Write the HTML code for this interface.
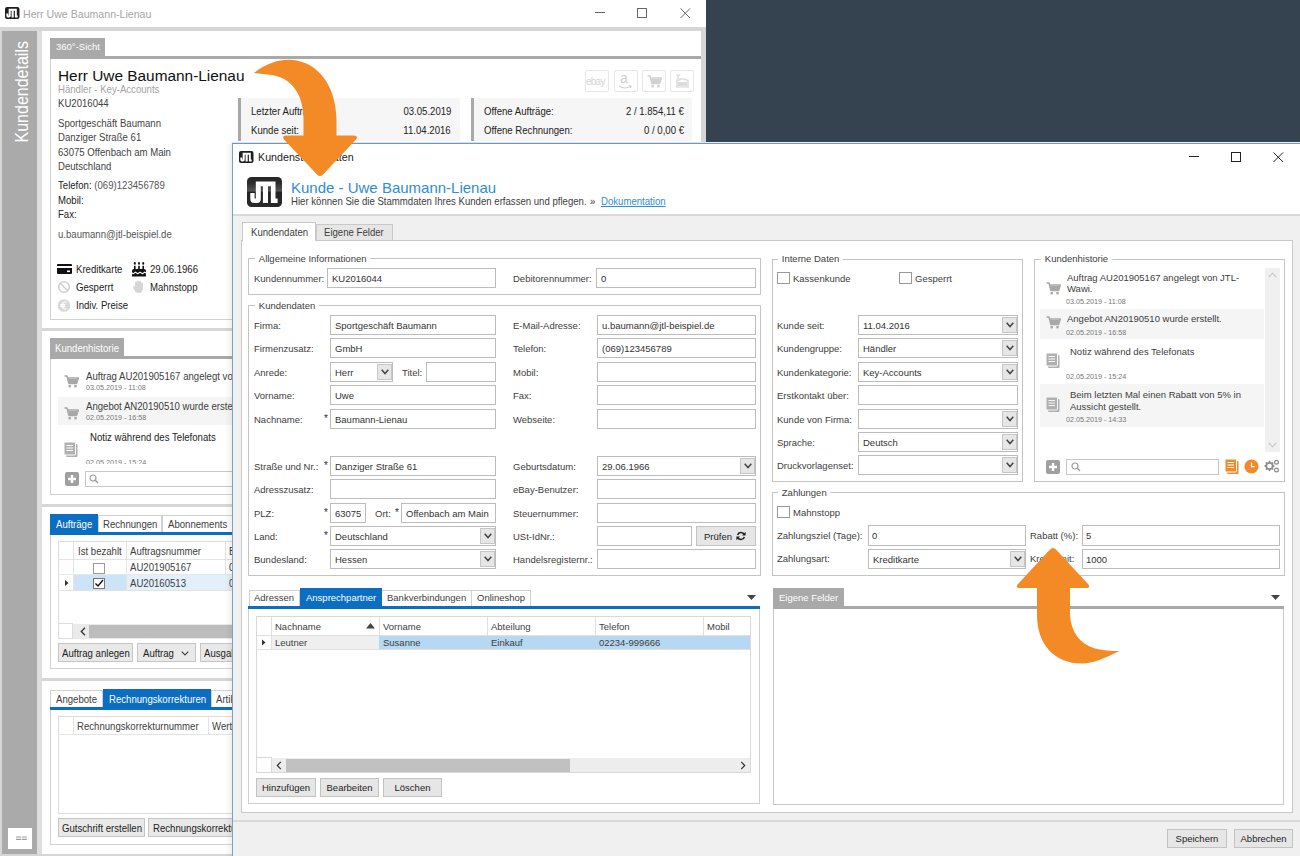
<!DOCTYPE html>
<html><head><meta charset="utf-8"><style>
html,body{margin:0;padding:0}
body{width:1300px;height:856px;overflow:hidden;position:relative;background:#34434f;font-family:"Liberation Sans",sans-serif}
body div,body span,body svg{position:absolute}
span{white-space:nowrap;line-height:1}
svg{overflow:visible}
</style></head><body>
<div style="left:0px;top:0px;width:706px;height:27px;background:#fff"></div>
<svg style="left:5px;top:7px" width="14.5" height="12" viewBox="0 0 35 30" preserveAspectRatio="none"><rect x="0" y="0" width="35" height="30" rx="5" fill="#1f1f1f"/><path d="M8.8 4.4H23.9V9.2H21V26H15.9V9.2H13.8V22Q13.8 26 9.8 26H7.3Q3.3 26 3.3 22V16H7.6V21.5H8.8Z M23.9 4.4H28.5V21.4H30.6V26H23.9Z" fill="#fff"/></svg>
<span style="left:23px;top:8.90px;font-size:11.13px;color:#a6a6a6;transform:scaleX(0.9524);transform-origin:0 0;">Herr Uwe Baumann-Lienau</span>
<svg style="left:595px;top:12px;" width="11" height="2" viewBox="0 0 11 2"><path d="M0 0.5h10" stroke="#666" stroke-width="1"/></svg>
<svg style="left:637px;top:8px;" width="11" height="11" viewBox="0 0 11 11"><rect x="0.5" y="0.5" width="9" height="9" fill="none" stroke="#666" stroke-width="1"/></svg>
<svg style="left:680px;top:8px;" width="11" height="11" viewBox="0 0 11 11"><path d="M0.5 0.5l9.5 9.5M10 0.5l-9.5 9.5" stroke="#666" stroke-width="1"/></svg>
<div style="left:0px;top:27px;width:706px;height:829px;background:#d6d6d6"></div>
<div style="left:2px;top:31px;width:35px;height:823px;background:#aaaaaa"></div>
<div style="left:37px;top:31px;width:5px;height:823px;background:#dedede"></div>
<div style="left:42px;top:31px;width:659px;height:823px;background:#fff"></div>
<span style="left:-28px;top:88px;width:100px;height:18px;line-height:18px;font-size:17.6px;color:#fff;transform:rotate(-90deg) scaleX(0.91);transform-origin:50% 50%;text-align:center">Kundendetails</span>
<div style="left:8px;top:828px;width:24px;height:21px;background:#fff"></div>
<svg style="left:16px;top:836px" width="11" height="5"><path d="M0 1h5M5.8 1h5M0 3.3h5M5.8 3.3h5" stroke="#9a9a9a" stroke-width="1.2"/></svg>
<div style="left:50px;top:38px;width:55px;height:19px;background:#a9a9a9"></div>
<span style="left:56px;top:41.82px;font-size:9.97px;color:#fff;transform:scaleX(0.9524);transform-origin:0 0;">360°-Sicht</span>
<div style="left:50px;top:56px;width:651px;height:3px;background:#a9a9a9"></div>
<div style="left:50px;top:59px;width:651px;height:261px;border:1px solid #d2d2d2;border-top:none;border-right:none;box-sizing:border-box"></div>
<span style="left:58px;top:68.48px;font-size:15.40px;color:#111;">Herr Uwe Baumann-Lienau</span>
<span style="left:58px;top:84.74px;font-size:10.08px;color:#a3a3a3;transform:scaleX(0.9524);transform-origin:0 0;">Händler - Key-Accounts</span>
<span style="left:58px;top:98.74px;font-size:10.08px;color:#404040;transform:scaleX(0.9524);transform-origin:0 0;">KU2016044</span>
<span style="left:58px;top:118.74px;font-size:10.08px;color:#444;transform:scaleX(0.9524);transform-origin:0 0;">Sportgeschäft Baumann</span>
<span style="left:58px;top:132.74px;font-size:10.08px;color:#444;transform:scaleX(0.9524);transform-origin:0 0;">Danziger Straße 61</span>
<span style="left:58px;top:147.74px;font-size:10.08px;color:#444;transform:scaleX(0.9524);transform-origin:0 0;">63075 Offenbach am Main</span>
<span style="left:58px;top:161.74px;font-size:10.08px;color:#444;transform:scaleX(0.9524);transform-origin:0 0;">Deutschland</span>
<span style="left:58px;top:180.74px;font-size:10.08px;color:#222;transform:scaleX(0.9524);transform-origin:0 0;">Telefon: <span style="position:static;color:#555">(069)123456789</span></span>
<span style="left:58px;top:195.74px;font-size:10.08px;color:#222;transform:scaleX(0.9524);transform-origin:0 0;">Mobil:</span>
<span style="left:58px;top:209.74px;font-size:10.08px;color:#222;transform:scaleX(0.9524);transform-origin:0 0;">Fax:</span>
<span style="left:58px;top:229.74px;font-size:10.08px;color:#555;transform:scaleX(0.9524);transform-origin:0 0;">u.baumann@jtl-beispiel.de</span>
<svg style="left:57px;top:264px;" width="15" height="10" viewBox="0 0 15 10"><rect x="0" y="0" width="15" height="10" rx="1" fill="#111"/><rect x="0" y="2" width="15" height="2" fill="#fff"/><rect x="10" y="6.5" width="3" height="1.6" fill="#fff"/></svg>
<span style="left:76px;top:264.74px;font-size:10.08px;color:#222;transform:scaleX(0.9524);transform-origin:0 0;">Kreditkarte</span>
<svg style="left:132px;top:262px;" width="14" height="15" viewBox="0 0 14 15"><g fill="#111"><ellipse cx="2.8" cy="1.4" rx="1" ry="1.3"/><ellipse cx="7" cy="1.4" rx="1" ry="1.3"/><ellipse cx="11.2" cy="1.4" rx="1" ry="1.3"/><rect x="2" y="3.8" width="1.6" height="4"/><rect x="6.2" y="3.8" width="1.6" height="4"/><rect x="10.4" y="3.8" width="1.6" height="4"/><path d="M0 10.3V9Q0 7 2 7H12Q14 7 14 9V10.3L14.00 10.49L13.65 10.16L13.30 9.86L12.95 9.66L12.60 9.60L12.25 9.70L11.90 9.94L11.55 10.25L11.20 10.58L10.85 10.84L10.50 10.99L10.15 10.97L9.80 10.81L9.45 10.53L9.10 10.20L8.75 9.90L8.40 9.68L8.05 9.60L7.70 9.68L7.35 9.90L7.00 10.20L6.65 10.53L6.30 10.81L5.95 10.97L5.60 10.99L5.25 10.84L4.90 10.58L4.55 10.25L4.20 9.94L3.85 9.70L3.50 9.60L3.15 9.66L2.80 9.86L2.45 10.16L2.10 10.49L1.75 10.78L1.40 10.96L1.05 10.99L0.70 10.87L0.35 10.62L0.00 10.30Z"/><path d="M0.00 11.60L0.35 11.92L0.70 12.17L1.05 12.29L1.40 12.26L1.75 12.08L2.10 11.79L2.45 11.46L2.80 11.16L3.15 10.96L3.50 10.90L3.85 11.00L4.20 11.24L4.55 11.55L4.90 11.88L5.25 12.14L5.60 12.29L5.95 12.27L6.30 12.11L6.65 11.83L7.00 11.50L7.35 11.20L7.70 10.98L8.05 10.90L8.40 10.98L8.75 11.20L9.10 11.50L9.45 11.83L9.80 12.11L10.15 12.27L10.50 12.29L10.85 12.14L11.20 11.88L11.55 11.55L11.90 11.24L12.25 11.00L12.60 10.90L12.95 10.96L13.30 11.16L13.65 11.46L14.00 11.79V14.4H0Z"/></g></svg>
<span style="left:150px;top:264.74px;font-size:10.08px;color:#222;transform:scaleX(0.9524);transform-origin:0 0;">29.06.1966</span>
<svg style="left:57px;top:281px;" width="14" height="12" viewBox="0 0 14 12"><circle cx="7" cy="6" r="5.3" fill="none" stroke="#cfcfcf" stroke-width="1.5"/><path d="M3.3 2.3l7.4 7.4" stroke="#cfcfcf" stroke-width="1.5"/></svg>
<span style="left:76px;top:282.74px;font-size:10.08px;color:#222;transform:scaleX(0.9524);transform-origin:0 0;">Gesperrt</span>
<svg style="left:133px;top:280px;" width="12" height="13" viewBox="0 0 12 13"><path d="M2 6v-3.5a1 1 0 0 1 2 0V6V1.5a1 1 0 0 1 2 0V6V2a1 1 0 0 1 2 0V6V3.5a1 1 0 0 1 2 0V8q0 5-4.5 5Q2.5 13 1 9.5L0 7q0-1 1-.5z" fill="#d6d6d6"/></svg>
<span style="left:150px;top:282.74px;font-size:10.08px;color:#222;transform:scaleX(0.9524);transform-origin:0 0;">Mahnstopp</span>
<svg style="left:57px;top:299px;" width="14" height="13" viewBox="0 0 14 13"><circle cx="7" cy="6.5" r="6.3" fill="#d9d9d9"/><path d="M9.6 3.2A3.5 3.5 0 1 0 9.6 9.8M3.3 5.6h5M3.3 7.4h5" fill="none" stroke="#fff" stroke-width="1.2"/></svg>
<span style="left:76px;top:300.74px;font-size:10.08px;color:#222;transform:scaleX(0.9524);transform-origin:0 0;">Indiv. Preise</span>
<div style="left:585px;top:70px;width:24px;height:22px;border:1px solid #e6e6e6;border-radius:2px;box-sizing:border-box"></div>
<div style="left:614px;top:70px;width:24px;height:22px;border:1px solid #e6e6e6;border-radius:2px;box-sizing:border-box"></div>
<div style="left:642px;top:70px;width:24px;height:22px;border:1px solid #e6e6e6;border-radius:2px;box-sizing:border-box"></div>
<div style="left:670px;top:70px;width:24px;height:22px;border:1px solid #e6e6e6;border-radius:2px;box-sizing:border-box"></div>
<span style="left:586px;top:76.40px;font-size:10.50px;color:#d4d4d4;transform:scaleX(0.9524);transform-origin:0 0;letter-spacing:-0.8px">ebay</span>
<span style="left:620px;top:71.04px;font-size:14.70px;color:#d0d0d0;transform:scaleX(0.9524);transform-origin:0 0;">a</span>
<svg style="left:618px;top:85px;" width="15" height="5" viewBox="0 0 15 5"><path d="M1 1q6 4 12 0M11 0.3l2 .7-.6 2" fill="none" stroke="#d0d0d0" stroke-width="1.1"/></svg>
<svg style="left:647px;top:75px;" width="15" height="13" viewBox="0 0 15 13"><path d="M0.5 1h2.5l2 7.5h7.5l1.8-5.5h-10" fill="none" stroke="#d0d0d0" stroke-width="1.6" stroke-linejoin="round"/><rect x="4.5" y="4" width="8.5" height="4" fill="#d0d0d0"/><rect x="4.5" y="10" width="2.4" height="2.4" fill="#d0d0d0"/><rect x="10.3" y="10" width="2.4" height="2.4" fill="#d0d0d0"/></svg>
<svg style="left:675px;top:74px;" width="15" height="15" viewBox="0 0 15 15"><path d="M1 1h4M3 1v4M1 13h13M2 13v-7h3v-1h5v1h3v7" fill="none" stroke="#d4d4d4" stroke-width="1.2"/><rect x="3" y="8" width="9" height="4" fill="#dcdcdc"/></svg>
<div style="left:238px;top:98px;width:3px;height:43px;background:#a9a9a9"></div>
<div style="left:241px;top:98px;width:219px;height:43px;background:#f6f6f6"></div>
<span style="left:251px;top:106.74px;font-size:10.08px;color:#222;transform:scaleX(0.9524);transform-origin:0 0;">Letzter Auftrag:</span>
<span style="right:849px;top:106.74px;font-size:10.08px;color:#222;transform:scaleX(0.9524);transform-origin:100% 0;">03.05.2019</span>
<span style="left:251px;top:125.74px;font-size:10.08px;color:#222;transform:scaleX(0.9524);transform-origin:0 0;">Kunde seit:</span>
<span style="right:849px;top:125.74px;font-size:10.08px;color:#222;transform:scaleX(0.9524);transform-origin:100% 0;">11.04.2016</span>
<div style="left:471px;top:98px;width:3px;height:43px;background:#a9a9a9"></div>
<div style="left:474px;top:98px;width:218px;height:43px;background:#f6f6f6"></div>
<span style="left:484px;top:106.74px;font-size:10.08px;color:#222;transform:scaleX(0.9524);transform-origin:0 0;">Offene Aufträge:</span>
<span style="right:616px;top:106.74px;font-size:10.08px;color:#222;transform:scaleX(0.9524);transform-origin:100% 0;">2 / 1.854,11 €</span>
<span style="left:484px;top:125.74px;font-size:10.08px;color:#222;transform:scaleX(0.9524);transform-origin:0 0;">Offene Rechnungen:</span>
<span style="right:616px;top:125.74px;font-size:10.08px;color:#222;transform:scaleX(0.9524);transform-origin:100% 0;">0 / 0,00 €</span>
<div style="left:42px;top:328px;width:659px;height:3px;background:#d6d6d6"></div>
<div style="left:50px;top:338px;width:74px;height:18px;background:#a9a9a9"></div>
<span style="left:55px;top:343.74px;font-size:10.08px;color:#fff;transform:scaleX(0.9524);transform-origin:0 0;">Kundenhistorie</span>
<div style="left:50px;top:356px;width:650px;height:3px;background:#a9a9a9"></div>
<div style="left:50px;top:359px;width:648px;height:136px;border:1px solid #d2d2d2;border-top:none;box-sizing:border-box"></div>
<svg style="left:64px;top:375px;" width="15" height="13" viewBox="0 0 15 13"><path d="M0.5 1h2.5l2 7.5h7.5l1.8-5.5h-10" fill="none" stroke="#a8a8a8" stroke-width="1.6" stroke-linejoin="round"/><rect x="4.5" y="4" width="8.5" height="4" fill="#a8a8a8"/><rect x="4.5" y="10" width="2.4" height="2.4" fill="#a8a8a8"/><rect x="10.3" y="10" width="2.4" height="2.4" fill="#a8a8a8"/></svg>
<span style="left:86px;top:371.74px;font-size:10.08px;color:#404040;transform:scaleX(0.9524);transform-origin:0 0;">Auftrag AU201905167 angelegt von JTL-Wawi.</span>
<span style="left:86px;top:384.25px;font-size:7.56px;color:#777;transform:scaleX(0.9524);transform-origin:0 0;">03.05.2019 - 11:08</span>
<div style="left:58px;top:397px;width:640px;height:28px;background:#f5f5f5"></div>
<svg style="left:64px;top:407px;" width="15" height="13" viewBox="0 0 15 13"><path d="M0.5 1h2.5l2 7.5h7.5l1.8-5.5h-10" fill="none" stroke="#a8a8a8" stroke-width="1.6" stroke-linejoin="round"/><rect x="4.5" y="4" width="8.5" height="4" fill="#a8a8a8"/><rect x="4.5" y="10" width="2.4" height="2.4" fill="#a8a8a8"/><rect x="10.3" y="10" width="2.4" height="2.4" fill="#a8a8a8"/></svg>
<span style="left:86px;top:401.74px;font-size:10.08px;color:#404040;transform:scaleX(0.9524);transform-origin:0 0;">Angebot AN20190510 wurde erstellt.</span>
<span style="left:86px;top:414.25px;font-size:7.56px;color:#777;transform:scaleX(0.9524);transform-origin:0 0;">02.05.2019 - 16:58</span>
<svg style="left:64px;top:442px;" width="14" height="15" viewBox="0 0 14 15"><rect x="2" y="2" width="11.5" height="13" rx="1" fill="#b0b0b0"/><rect x="0" y="0" width="11.5" height="13" rx="1" fill="#b0b0b0" stroke="#fff" stroke-width="1"/><path d="M2.5 3.5h6.5M2.5 6h6.5M2.5 8.5h6.5" stroke="#fff" stroke-width="1.1"/></svg>
<span style="left:90px;top:432.74px;font-size:10.08px;color:#222;transform:scaleX(0.9524);transform-origin:0 0;">Notiz während des Telefonats</span>
<div style="left:86px;top:458px;width:200px;height:6px;overflow:hidden"><span style="left:0;top:0.5px;font-size:7.2px;color:#777">02.05.2019 - 15:24</span></div>
<svg style="left:65px;top:472px;" width="14" height="14" viewBox="0 0 14 14"><rect x="0" y="0" width="14" height="14" rx="2" fill="#a0a0a0"/><path d="M7.0 3V11M3 7.0H11" stroke="#fff" stroke-width="2.4"/></svg>
<div style="left:85px;top:471px;width:615px;height:16px;border:1px solid #c8c8c8;box-sizing:border-box;background:#fff"></div>
<svg style="left:89px;top:474px;" width="10" height="10" viewBox="0 0 10 10"><circle cx="4" cy="4" r="3" fill="none" stroke="#9a9a9a" stroke-width="1.2"/><path d="M6.2 6.2l2.8 2.8" stroke="#9a9a9a" stroke-width="1.4"/></svg>
<div style="left:42px;top:504px;width:659px;height:3px;background:#d6d6d6"></div>
<div style="left:50px;top:514px;width:48px;height:18px;background:#0b6ec2"></div>
<span style="left:56px;top:519.74px;font-size:10.08px;color:#fff;transform:scaleX(0.9524);transform-origin:0 0;">Aufträge</span>
<div style="left:98px;top:515px;width:64px;height:17px;border:1px solid #d0d0d0;border-bottom:none;box-sizing:border-box;background:#fff"></div>
<span style="left:103px;top:519.74px;font-size:10.08px;color:#404040;transform:scaleX(0.9524);transform-origin:0 0;">Rechnungen</span>
<div style="left:162px;top:515px;width:80px;height:17px;border:1px solid #d0d0d0;border-bottom:none;box-sizing:border-box;background:#fff"></div>
<span style="left:168px;top:519.74px;font-size:10.08px;color:#404040;transform:scaleX(0.9524);transform-origin:0 0;">Abonnements</span>
<div style="left:50px;top:532px;width:650px;height:3px;background:#0b6ec2"></div>
<div style="left:50px;top:535px;width:648px;height:134px;border:1px solid #d2d2d2;border-top:none;box-sizing:border-box"></div>
<div style="left:58px;top:541px;width:640px;height:98px;border:1px solid #dcdcdc;box-sizing:border-box"></div>
<div style="left:58px;top:559px;width:640px;height:1px;background:#e3e3e3"></div>
<div style="left:73px;top:541px;width:1px;height:50px;background:#e3e3e3"></div>
<div style="left:126px;top:541px;width:1px;height:50px;background:#e3e3e3"></div>
<div style="left:225px;top:541px;width:1px;height:50px;background:#e3e3e3"></div>
<div style="left:58px;top:574px;width:640px;height:1px;background:#e8e8e8"></div>
<div style="left:74px;top:575px;width:52px;height:15px;background:#cce4f7"></div>
<div style="left:127px;top:575px;width:571px;height:15px;background:#e3effa"></div>
<div style="left:58px;top:590px;width:640px;height:1px;background:#e3e3e3"></div>
<span style="left:78px;top:546.74px;font-size:10.08px;color:#404040;transform:scaleX(0.9524);transform-origin:0 0;">Ist bezahlt</span>
<span style="left:130px;top:546.74px;font-size:10.08px;color:#404040;transform:scaleX(0.9524);transform-origin:0 0;">Auftragsnummer</span>
<span style="left:229px;top:546.74px;font-size:10.08px;color:#404040;transform:scaleX(0.9524);transform-origin:0 0;">B</span>
<div style="left:93px;top:563px;width:12px;height:11px;border:1px solid #9a9a9a;background:#fff;box-sizing:border-box"></div>
<span style="left:130px;top:562.74px;font-size:10.08px;color:#404040;transform:scaleX(0.9524);transform-origin:0 0;">AU201905167</span>
<span style="left:229px;top:562.74px;font-size:10.08px;color:#404040;transform:scaleX(0.9524);transform-origin:0 0;">0</span>
<div style="left:93px;top:578px;width:12px;height:11px;border:1px solid #777;background:#fff;box-sizing:border-box"></div>
<svg style="left:94px;top:579px;" width="10" height="9" viewBox="0 0 10 9"><path d="M1.5 4.5l2.5 2.5 5-6" fill="none" stroke="#111" stroke-width="1.4"/></svg>
<svg style="left:65px;top:580px;" width="4" height="6" viewBox="0 0 4 6"><path d="M0 0l3.5 3-3.5 3z" fill="#333"/></svg>
<span style="left:130px;top:578.74px;font-size:10.08px;color:#404040;transform:scaleX(0.9524);transform-origin:0 0;">AU20160513</span>
<span style="left:229px;top:578.74px;font-size:10.08px;color:#404040;transform:scaleX(0.9524);transform-origin:0 0;">0</span>
<div style="left:58px;top:624px;width:640px;height:15px;background:#eaeaea"></div>
<div style="left:58px;top:623px;width:15px;height:16px;background:#fff;border:1px solid #dcdcdc;box-sizing:border-box"></div>
<svg style="left:80px;top:627px;" width="6" height="9" viewBox="0 0 6 9"><path d="M5 0.8L1.3 4.5 5 8.2" fill="none" stroke="#333" stroke-width="1.3"/></svg>
<div style="left:89px;top:625px;width:611px;height:13px;background:#bdbdbd"></div>
<div style="left:58px;top:643px;width:75px;height:19px;background:#e9e9e9;border:1px solid #c6c6c6;box-sizing:border-box"></div>
<span style="left:62px;top:648.74px;font-size:10.08px;color:#222;transform:scaleX(0.9524);transform-origin:0 0;">Auftrag anlegen</span>
<div style="left:137px;top:643px;width:59px;height:19px;background:#e9e9e9;border:1px solid #c6c6c6;box-sizing:border-box"></div>
<span style="left:143px;top:648.74px;font-size:10.08px;color:#222;transform:scaleX(0.9524);transform-origin:0 0;">Auftrag</span>
<svg style="left:181px;top:651px;" width="8" height="5" viewBox="0 0 8 5"><path d="M0.7 0.7L4.0 4L7.3 0.7" fill="none" stroke="#444" stroke-width="1.2"/></svg>
<div style="left:200px;top:643px;width:60px;height:19px;background:#e9e9e9;border:1px solid #c6c6c6;box-sizing:border-box"></div>
<span style="left:204px;top:648.74px;font-size:10.08px;color:#222;transform:scaleX(0.9524);transform-origin:0 0;">Ausgabe</span>
<div style="left:42px;top:678px;width:659px;height:3px;background:#d6d6d6"></div>
<div style="left:50px;top:690px;width:53px;height:17px;border:1px solid #d0d0d0;border-bottom:none;box-sizing:border-box;background:#fff"></div>
<span style="left:56px;top:694.74px;font-size:10.08px;color:#404040;transform:scaleX(0.9524);transform-origin:0 0;">Angebote</span>
<div style="left:103px;top:689px;width:108px;height:18px;background:#0b6ec2"></div>
<span style="left:109px;top:694.74px;font-size:10.08px;color:#fff;transform:scaleX(0.9524);transform-origin:0 0;">Rechnungskorrekturen</span>
<div style="left:211px;top:690px;width:60px;height:17px;border:1px solid #d0d0d0;border-bottom:none;box-sizing:border-box;background:#fff"></div>
<span style="left:216px;top:694.74px;font-size:10.08px;color:#404040;transform:scaleX(0.9524);transform-origin:0 0;">Artikel</span>
<div style="left:50px;top:707px;width:650px;height:3px;background:#0b6ec2"></div>
<div style="left:50px;top:710px;width:648px;height:135px;border:1px solid #d2d2d2;border-top:none;box-sizing:border-box"></div>
<div style="left:58px;top:716px;width:640px;height:98px;border:1px solid #dcdcdc;box-sizing:border-box"></div>
<div style="left:58px;top:734px;width:640px;height:1px;background:#e3e3e3"></div>
<div style="left:73px;top:716px;width:1px;height:19px;background:#e3e3e3"></div>
<div style="left:208px;top:716px;width:1px;height:19px;background:#e3e3e3"></div>
<span style="left:77px;top:721.74px;font-size:10.08px;color:#404040;transform:scaleX(0.9524);transform-origin:0 0;">Rechnungskorrekturnummer</span>
<span style="left:212px;top:721.74px;font-size:10.08px;color:#404040;transform:scaleX(0.9524);transform-origin:0 0;">Wert</span>
<div style="left:58px;top:818px;width:87px;height:19px;background:#e9e9e9;border:1px solid #c6c6c6;box-sizing:border-box"></div>
<span style="left:62px;top:823.74px;font-size:10.08px;color:#222;transform:scaleX(0.9524);transform-origin:0 0;">Gutschrift erstellen</span>
<div style="left:148px;top:818px;width:110px;height:19px;background:#e9e9e9;border:1px solid #c6c6c6;box-sizing:border-box"></div>
<span style="left:153px;top:823.74px;font-size:10.08px;color:#222;transform:scaleX(0.9524);transform-origin:0 0;">Rechnungskorrektur</span>
<div style="left:232px;top:142px;width:1068px;height:714px;background:#f0f0f0"></div>
<div style="left:231px;top:142px;width:475px;height:1px;background:#d3e5f3"></div>
<div style="left:232px;top:143px;width:1068px;height:1px;background:#7497b9"></div>
<div style="left:232px;top:143px;width:1px;height:713px;background:#7aa0c4"></div>
<div style="left:225px;top:144px;width:7px;height:712px;background:linear-gradient(to right, rgba(0,0,0,0), rgba(0,0,0,0.06))"></div>
<div style="left:233px;top:144px;width:1067px;height:71px;background:#fff"></div>
<div style="left:233px;top:214px;width:1067px;height:2px;background:#d9d9d9"></div>
<svg style="left:239px;top:151px" width="14.5" height="12" viewBox="0 0 35 30" preserveAspectRatio="none"><rect x="0" y="0" width="35" height="30" rx="5" fill="#1f1f1f"/><path d="M8.8 4.4H23.9V9.2H21V26H15.9V9.2H13.8V22Q13.8 26 9.8 26H7.3Q3.3 26 3.3 22V16H7.6V21.5H8.8Z M23.9 4.4H28.5V21.4H30.6V26H23.9Z" fill="#fff"/></svg>
<span style="left:258px;top:151.81px;font-size:11.23px;color:#222;transform:scaleX(0.9524);transform-origin:0 0;">Kundenstammdaten</span>
<svg style="left:1189px;top:156px;" width="11" height="2" viewBox="0 0 11 2"><path d="M0 0.5h10" stroke="#222" stroke-width="1"/></svg>
<svg style="left:1231px;top:152px;" width="11" height="11" viewBox="0 0 11 11"><rect x="0.5" y="0.5" width="9" height="9" fill="none" stroke="#222" stroke-width="1"/></svg>
<svg style="left:1273px;top:152px;" width="11" height="11" viewBox="0 0 11 11"><path d="M0.5 0.5l9.5 9.5M10 0.5l-9.5 9.5" stroke="#222" stroke-width="1"/></svg>
<svg style="left:247px;top:177px;" width="35" height="30" viewBox="0 0 35 30"><defs><linearGradient id="jg" x1="0" y1="0" x2="0" y2="1"><stop offset="0" stop-color="#262626"/><stop offset="0.2" stop-color="#2c2c2c"/><stop offset="0.47" stop-color="#555"/><stop offset="0.5" stop-color="#232323"/><stop offset="1" stop-color="#2a2a2a"/></linearGradient></defs><rect x="0" y="0" width="35" height="30" rx="4.5" fill="url(#jg)"/><path d="M8.8 4.4H23.9V9.2H21V26H15.9V9.2H13.8V22Q13.8 26 9.8 26H7.3Q3.3 26 3.3 22V16H7.6V21.5H8.8Z M23.9 4.4H28.5V21.4H30.6V26H23.9Z" fill="#fff"/></svg>
<span style="left:291px;top:179.80px;font-size:15.00px;color:#2f8dd3;">Kunde - Uwe Baumann-Lienau</span>
<span style="left:291px;top:196.74px;font-size:10.08px;color:#404040;transform:scaleX(0.9524);transform-origin:0 0;">Hier können Sie die Stammdaten Ihres Kunden erfassen und pflegen.</span>
<span style="left:590px;top:196.74px;font-size:10.08px;color:#404040;transform:scaleX(0.9524);transform-origin:0 0;">»</span>
<span style="left:601px;top:196.74px;font-size:10.08px;color:#2f8dd3;transform:scaleX(0.9524);transform-origin:0 0;text-decoration:underline">Dokumentation</span>
<div style="left:241px;top:240px;width:1052px;height:573px;background:#fff;border:1px solid #c9c9c9;box-sizing:border-box"></div>
<div style="left:316px;top:224px;width:77px;height:17px;background:#e6e6e6;border:1px solid #c9c9c9;box-sizing:border-box"></div>
<span style="left:324px;top:227.74px;font-size:10.08px;color:#404040;transform:scaleX(0.9524);transform-origin:0 0;">Eigene Felder</span>
<div style="left:242px;top:222px;width:74px;height:19px;background:#fff;border:1px solid #c9c9c9;border-bottom:none;box-sizing:border-box"></div>
<span style="left:251px;top:227.74px;font-size:10.08px;color:#404040;transform:scaleX(0.9524);transform-origin:0 0;">Kundendaten</span>
<div style="left:248px;top:258px;width:513px;height:37px;border:1px solid #c4c4c4;box-sizing:border-box"></div>
<span style="left:259px;top:253.82px;font-size:9.97px;color:#404040;transform:scaleX(0.9524);transform-origin:0 0;background:#fff;padding:0 4px;margin-left:-4px">Allgemeine Informationen</span>
<span style="left:254px;top:273.82px;font-size:9.97px;color:#404040;transform:scaleX(0.9524);transform-origin:0 0;">Kundennummer:</span>
<div style="left:327px;top:268px;width:169px;height:20px;background:#fff;border:1px solid #bcbcbc;box-sizing:border-box"></div>
<span style="left:332px;top:273.82px;font-size:9.97px;color:#333;transform:scaleX(0.9524);transform-origin:0 0;">KU2016044</span>
<span style="left:513px;top:273.82px;font-size:9.97px;color:#404040;transform:scaleX(0.9524);transform-origin:0 0;">Debitorennummer:</span>
<div style="left:596px;top:268px;width:160px;height:20px;background:#fff;border:1px solid #bcbcbc;box-sizing:border-box"></div>
<span style="left:601px;top:273.82px;font-size:9.97px;color:#333;transform:scaleX(0.9524);transform-origin:0 0;">0</span>
<div style="left:248px;top:305px;width:513px;height:271px;border:1px solid #c4c4c4;box-sizing:border-box"></div>
<span style="left:259px;top:300.82px;font-size:9.97px;color:#404040;transform:scaleX(0.9524);transform-origin:0 0;background:#fff;padding:0 4px;margin-left:-4px">Kundendaten</span>
<span style="left:254px;top:320.82px;font-size:9.97px;color:#404040;transform:scaleX(0.9524);transform-origin:0 0;">Firma:</span>
<div style="left:330px;top:315px;width:166px;height:20px;background:#fff;border:1px solid #bcbcbc;box-sizing:border-box"></div>
<span style="left:335px;top:320.82px;font-size:9.97px;color:#333;transform:scaleX(0.9524);transform-origin:0 0;">Sportgeschäft Baumann</span>
<span style="left:254px;top:343.82px;font-size:9.97px;color:#404040;transform:scaleX(0.9524);transform-origin:0 0;">Firmenzusatz:</span>
<div style="left:330px;top:338px;width:166px;height:20px;background:#fff;border:1px solid #bcbcbc;box-sizing:border-box"></div>
<span style="left:335px;top:343.82px;font-size:9.97px;color:#333;transform:scaleX(0.9524);transform-origin:0 0;">GmbH</span>
<span style="left:254px;top:367.82px;font-size:9.97px;color:#404040;transform:scaleX(0.9524);transform-origin:0 0;">Anrede:</span>
<div style="left:330px;top:362px;width:63px;height:20px;background:#fff;border:1px solid #bcbcbc;box-sizing:border-box"></div>
<span style="left:335px;top:367.82px;font-size:9.97px;color:#333;transform:scaleX(0.9524);transform-origin:0 0;">Herr</span>
<div style="left:377px;top:364px;width:15px;height:16px;background:#e6e6e6;border:1px solid #c6c6c6;box-sizing:border-box"></div>
<svg style="left:380.5px;top:369px;" width="8" height="5.5" viewBox="0 0 8 5.5"><path d="M0.7 0.7L4.0 4.5L7.3 0.7" fill="none" stroke="#444" stroke-width="1.5"/></svg>
<span style="left:402px;top:367.82px;font-size:9.97px;color:#404040;transform:scaleX(0.9524);transform-origin:0 0;">Titel:</span>
<div style="left:426px;top:362px;width:70px;height:20px;background:#fff;border:1px solid #bcbcbc;box-sizing:border-box"></div>
<span style="left:254px;top:390.82px;font-size:9.97px;color:#404040;transform:scaleX(0.9524);transform-origin:0 0;">Vorname:</span>
<div style="left:330px;top:385px;width:166px;height:20px;background:#fff;border:1px solid #bcbcbc;box-sizing:border-box"></div>
<span style="left:335px;top:390.82px;font-size:9.97px;color:#333;transform:scaleX(0.9524);transform-origin:0 0;">Uwe</span>
<span style="left:254px;top:414.82px;font-size:9.97px;color:#404040;transform:scaleX(0.9524);transform-origin:0 0;">Nachname:</span>
<span style="left:324px;top:413.40px;font-size:10.50px;color:#333;transform:scaleX(0.9524);transform-origin:0 0;">*</span>
<div style="left:330px;top:409px;width:166px;height:20px;background:#fff;border:1px solid #bcbcbc;box-sizing:border-box"></div>
<span style="left:335px;top:414.82px;font-size:9.97px;color:#333;transform:scaleX(0.9524);transform-origin:0 0;">Baumann-Lienau</span>
<span style="left:254px;top:461.82px;font-size:9.97px;color:#404040;transform:scaleX(0.9524);transform-origin:0 0;">Straße und Nr.:</span>
<span style="left:324px;top:460.40px;font-size:10.50px;color:#333;transform:scaleX(0.9524);transform-origin:0 0;">*</span>
<div style="left:330px;top:456px;width:166px;height:20px;background:#fff;border:1px solid #bcbcbc;box-sizing:border-box"></div>
<span style="left:335px;top:461.82px;font-size:9.97px;color:#333;transform:scaleX(0.9524);transform-origin:0 0;">Danziger Straße 61</span>
<span style="left:254px;top:484.82px;font-size:9.97px;color:#404040;transform:scaleX(0.9524);transform-origin:0 0;">Adresszusatz:</span>
<div style="left:330px;top:479px;width:166px;height:20px;background:#fff;border:1px solid #bcbcbc;box-sizing:border-box"></div>
<span style="left:254px;top:508.82px;font-size:9.97px;color:#404040;transform:scaleX(0.9524);transform-origin:0 0;">PLZ:</span>
<span style="left:324px;top:507.40px;font-size:10.50px;color:#333;transform:scaleX(0.9524);transform-origin:0 0;">*</span>
<div style="left:330px;top:503px;width:36px;height:20px;background:#fff;border:1px solid #bcbcbc;box-sizing:border-box"></div>
<span style="left:335px;top:508.82px;font-size:9.97px;color:#333;transform:scaleX(0.9524);transform-origin:0 0;">63075</span>
<span style="left:375px;top:508.82px;font-size:9.97px;color:#404040;transform:scaleX(0.9524);transform-origin:0 0;">Ort:</span>
<span style="left:395px;top:507.40px;font-size:10.50px;color:#333;transform:scaleX(0.9524);transform-origin:0 0;">*</span>
<div style="left:401px;top:503px;width:95px;height:20px;background:#fff;border:1px solid #bcbcbc;box-sizing:border-box"></div>
<span style="left:406px;top:508.82px;font-size:9.97px;color:#333;transform:scaleX(0.9524);transform-origin:0 0;">Offenbach am Main</span>
<span style="left:254px;top:531.82px;font-size:9.97px;color:#404040;transform:scaleX(0.9524);transform-origin:0 0;">Land:</span>
<span style="left:324px;top:530.40px;font-size:10.50px;color:#333;transform:scaleX(0.9524);transform-origin:0 0;">*</span>
<div style="left:330px;top:526px;width:166px;height:20px;background:#fff;border:1px solid #bcbcbc;box-sizing:border-box"></div>
<span style="left:335px;top:531.82px;font-size:9.97px;color:#333;transform:scaleX(0.9524);transform-origin:0 0;">Deutschland</span>
<div style="left:480px;top:528px;width:15px;height:16px;background:#e6e6e6;border:1px solid #c6c6c6;box-sizing:border-box"></div>
<svg style="left:483.5px;top:533px;" width="8" height="5.5" viewBox="0 0 8 5.5"><path d="M0.7 0.7L4.0 4.5L7.3 0.7" fill="none" stroke="#444" stroke-width="1.5"/></svg>
<span style="left:254px;top:554.82px;font-size:9.97px;color:#404040;transform:scaleX(0.9524);transform-origin:0 0;">Bundesland:</span>
<div style="left:330px;top:549px;width:166px;height:20px;background:#fff;border:1px solid #bcbcbc;box-sizing:border-box"></div>
<span style="left:335px;top:554.82px;font-size:9.97px;color:#333;transform:scaleX(0.9524);transform-origin:0 0;">Hessen</span>
<div style="left:480px;top:551px;width:15px;height:16px;background:#e6e6e6;border:1px solid #c6c6c6;box-sizing:border-box"></div>
<svg style="left:483.5px;top:556px;" width="8" height="5.5" viewBox="0 0 8 5.5"><path d="M0.7 0.7L4.0 4.5L7.3 0.7" fill="none" stroke="#444" stroke-width="1.5"/></svg>
<span style="left:513px;top:320.82px;font-size:9.97px;color:#404040;transform:scaleX(0.9524);transform-origin:0 0;">E-Mail-Adresse:</span>
<div style="left:597px;top:315px;width:159px;height:20px;background:#fff;border:1px solid #bcbcbc;box-sizing:border-box"></div>
<span style="left:602px;top:320.82px;font-size:9.97px;color:#333;transform:scaleX(0.9524);transform-origin:0 0;">u.baumann@jtl-beispiel.de</span>
<span style="left:513px;top:343.82px;font-size:9.97px;color:#404040;transform:scaleX(0.9524);transform-origin:0 0;">Telefon:</span>
<div style="left:597px;top:338px;width:159px;height:20px;background:#fff;border:1px solid #bcbcbc;box-sizing:border-box"></div>
<span style="left:602px;top:343.82px;font-size:9.97px;color:#333;transform:scaleX(0.9524);transform-origin:0 0;">(069)123456789</span>
<span style="left:513px;top:367.82px;font-size:9.97px;color:#404040;transform:scaleX(0.9524);transform-origin:0 0;">Mobil:</span>
<div style="left:597px;top:362px;width:159px;height:20px;background:#fff;border:1px solid #bcbcbc;box-sizing:border-box"></div>
<span style="left:513px;top:390.82px;font-size:9.97px;color:#404040;transform:scaleX(0.9524);transform-origin:0 0;">Fax:</span>
<div style="left:597px;top:385px;width:159px;height:20px;background:#fff;border:1px solid #bcbcbc;box-sizing:border-box"></div>
<span style="left:513px;top:414.82px;font-size:9.97px;color:#404040;transform:scaleX(0.9524);transform-origin:0 0;">Webseite:</span>
<div style="left:597px;top:409px;width:159px;height:20px;background:#fff;border:1px solid #bcbcbc;box-sizing:border-box"></div>
<span style="left:513px;top:461.82px;font-size:9.97px;color:#404040;transform:scaleX(0.9524);transform-origin:0 0;">Geburtsdatum:</span>
<div style="left:597px;top:456px;width:159px;height:20px;background:#fff;border:1px solid #bcbcbc;box-sizing:border-box"></div>
<span style="left:602px;top:461.82px;font-size:9.97px;color:#333;transform:scaleX(0.9524);transform-origin:0 0;">29.06.1966</span>
<div style="left:740px;top:458px;width:15px;height:16px;background:#e6e6e6;border:1px solid #c6c6c6;box-sizing:border-box"></div>
<svg style="left:743.5px;top:463px;" width="8" height="5.5" viewBox="0 0 8 5.5"><path d="M0.7 0.7L4.0 4.5L7.3 0.7" fill="none" stroke="#444" stroke-width="1.5"/></svg>
<span style="left:513px;top:484.82px;font-size:9.97px;color:#404040;transform:scaleX(0.9524);transform-origin:0 0;">eBay-Benutzer:</span>
<div style="left:597px;top:479px;width:159px;height:20px;background:#fff;border:1px solid #bcbcbc;box-sizing:border-box"></div>
<span style="left:513px;top:508.82px;font-size:9.97px;color:#404040;transform:scaleX(0.9524);transform-origin:0 0;">Steuernummer:</span>
<div style="left:597px;top:503px;width:159px;height:20px;background:#fff;border:1px solid #bcbcbc;box-sizing:border-box"></div>
<span style="left:513px;top:531.82px;font-size:9.97px;color:#404040;transform:scaleX(0.9524);transform-origin:0 0;">USt-IdNr.:</span>
<div style="left:597px;top:526px;width:95px;height:20px;background:#fff;border:1px solid #bcbcbc;box-sizing:border-box"></div>
<div style="left:696px;top:526px;width:60px;height:20px;background:#e6e6e6;border:1px solid #c3c3c3;box-sizing:border-box"></div>
<span style="left:704px;top:531.82px;font-size:9.97px;color:#222;transform:scaleX(0.9524);transform-origin:0 0;">Prüfen</span>
<svg style="left:736px;top:531px;" width="10" height="10" viewBox="0 0 10 10"><path d="M8.3 3.6A3.6 3.6 0 0 0 1.6 3.9M1.7 6.4a3.6 3.6 0 0 0 6.7-.3" fill="none" stroke="#222" stroke-width="1.6"/><path d="M9.6 0.8v3.6H6z M0.4 9.2V5.6H4z" fill="#222"/></svg>
<span style="left:513px;top:554.82px;font-size:9.97px;color:#404040;transform:scaleX(0.9524);transform-origin:0 0;">Handelsregisternr.:</span>
<div style="left:597px;top:549px;width:159px;height:20px;background:#fff;border:1px solid #bcbcbc;box-sizing:border-box"></div>
<div style="left:249px;top:590px;width:51px;height:16px;background:#fff;border:1px solid #d0d0d0;border-bottom:none;box-sizing:border-box"></div>
<span style="left:254px;top:592.82px;font-size:9.97px;color:#404040;transform:scaleX(0.9524);transform-origin:0 0;">Adressen</span>
<div style="left:300px;top:588px;width:82px;height:18px;background:#0b6ec2"></div>
<span style="left:306px;top:592.82px;font-size:9.97px;color:#fff;transform:scaleX(0.9524);transform-origin:0 0;">Ansprechpartner</span>
<div style="left:382px;top:590px;width:90px;height:16px;background:#fff;border:1px solid #d0d0d0;border-bottom:none;border-left:none;box-sizing:border-box"></div>
<span style="left:387px;top:592.82px;font-size:9.97px;color:#404040;transform:scaleX(0.9524);transform-origin:0 0;">Bankverbindungen</span>
<div style="left:472px;top:590px;width:59px;height:16px;background:#fff;border:1px solid #d0d0d0;border-bottom:none;border-left:none;box-sizing:border-box"></div>
<span style="left:477px;top:592.82px;font-size:9.97px;color:#404040;transform:scaleX(0.9524);transform-origin:0 0;">Onlineshop</span>
<svg style="left:747px;top:595px;" width="9" height="5" viewBox="0 0 9 5"><path d="M0 0H9L4.5 5z" fill="#444"/></svg>
<div style="left:248px;top:606px;width:512px;height:3px;background:#0b6ec2"></div>
<div style="left:248px;top:609px;width:512px;height:195px;border:1px solid #cfcfcf;border-top:none;box-sizing:border-box"></div>
<div style="left:256px;top:616px;width:495px;height:157px;border:1px solid #d9d9d9;box-sizing:border-box;background:#fff"></div>
<div style="left:271px;top:617px;width:1px;height:19px;background:#e0e0e0"></div>
<div style="left:379px;top:617px;width:1px;height:19px;background:#e0e0e0"></div>
<div style="left:487px;top:617px;width:1px;height:19px;background:#e0e0e0"></div>
<div style="left:595px;top:617px;width:1px;height:19px;background:#e0e0e0"></div>
<div style="left:703px;top:617px;width:1px;height:19px;background:#e0e0e0"></div>
<div style="left:257px;top:635px;width:493px;height:1px;background:#e0e0e0"></div>
<div style="left:257px;top:649px;width:493px;height:1px;background:#e0e0e0"></div>
<div style="left:271px;top:636px;width:1px;height:13px;background:#e0e0e0"></div>
<div style="left:272px;top:636px;width:107px;height:13px;background:#efefef"></div>
<div style="left:379px;top:636px;width:371px;height:13px;background:#b6d8f2"></div>
<span style="left:275px;top:621.82px;font-size:9.97px;color:#404040;transform:scaleX(0.9524);transform-origin:0 0;">Nachname</span>
<svg style="left:366px;top:623px;" width="10" height="6" viewBox="0 0 10 6"><path d="M0 5.5H9L4.5 0z" fill="#444"/></svg>
<span style="left:383px;top:621.82px;font-size:9.97px;color:#404040;transform:scaleX(0.9524);transform-origin:0 0;">Vorname</span>
<span style="left:491px;top:621.82px;font-size:9.97px;color:#404040;transform:scaleX(0.9524);transform-origin:0 0;">Abteilung</span>
<span style="left:599px;top:621.82px;font-size:9.97px;color:#404040;transform:scaleX(0.9524);transform-origin:0 0;">Telefon</span>
<span style="left:707px;top:621.82px;font-size:9.97px;color:#404040;transform:scaleX(0.9524);transform-origin:0 0;">Mobil</span>
<svg style="left:262px;top:639px;" width="4" height="7" viewBox="0 0 4 7"><path d="M0 0.5l3.5 3-3.5 3z" fill="#333"/></svg>
<span style="left:275px;top:637.82px;font-size:9.97px;color:#404040;transform:scaleX(0.9524);transform-origin:0 0;">Leutner</span>
<span style="left:383px;top:637.82px;font-size:9.97px;color:#404040;transform:scaleX(0.9524);transform-origin:0 0;">Susanne</span>
<span style="left:491px;top:637.82px;font-size:9.97px;color:#404040;transform:scaleX(0.9524);transform-origin:0 0;">Einkauf</span>
<span style="left:599px;top:637.82px;font-size:9.97px;color:#404040;transform:scaleX(0.9524);transform-origin:0 0;">02234-999666</span>
<div style="left:257px;top:758px;width:493px;height:14px;background:#ededed"></div>
<div style="left:256px;top:757px;width:16px;height:16px;background:#fff;border:1px solid #d9d9d9;box-sizing:border-box"></div>
<svg style="left:276px;top:761px;" width="6" height="9" viewBox="0 0 6 9"><path d="M4.8 0.8L1.3 4.5 4.8 8.2" fill="none" stroke="#333" stroke-width="1.2"/></svg>
<div style="left:286px;top:759px;width:284px;height:13px;background:#c1c1c1"></div>
<svg style="left:740px;top:761px;" width="6" height="9" viewBox="0 0 6 9"><path d="M1.2 0.8L4.7 4.5 1.2 8.2" fill="none" stroke="#333" stroke-width="1.2"/></svg>
<div style="left:256px;top:778px;width:60px;height:19px;background:#e6e6e6;border:1px solid #c3c3c3;box-sizing:border-box"></div>
<span style="left:256px;top:783.20px;width:60px;text-align:center;font-size:9.5px;color:#222">Hinzufügen</span>
<div style="left:320px;top:778px;width:59px;height:19px;background:#e6e6e6;border:1px solid #c3c3c3;box-sizing:border-box"></div>
<span style="left:320px;top:783.20px;width:59px;text-align:center;font-size:9.5px;color:#222">Bearbeiten</span>
<div style="left:383px;top:778px;width:59px;height:19px;background:#e6e6e6;border:1px solid #c3c3c3;box-sizing:border-box"></div>
<span style="left:383px;top:783.20px;width:59px;text-align:center;font-size:9.5px;color:#222">Löschen</span>
<div style="left:772px;top:259px;width:251px;height:223px;border:1px solid #c4c4c4;box-sizing:border-box"></div>
<span style="left:782px;top:253.82px;font-size:9.97px;color:#404040;transform:scaleX(0.9524);transform-origin:0 0;background:#fff;padding:0 4px;margin-left:-4px">Interne Daten</span>
<div style="left:777px;top:272px;width:13px;height:12px;border:1px solid #9a9a9a;background:#fff;box-sizing:border-box"></div>
<span style="left:793px;top:273.82px;font-size:9.97px;color:#404040;transform:scaleX(0.9524);transform-origin:0 0;">Kassenkunde</span>
<div style="left:899px;top:272px;width:13px;height:12px;border:1px solid #9a9a9a;background:#fff;box-sizing:border-box"></div>
<span style="left:915px;top:273.82px;font-size:9.97px;color:#404040;transform:scaleX(0.9524);transform-origin:0 0;">Gesperrt</span>
<span style="left:777px;top:320.82px;font-size:9.97px;color:#404040;transform:scaleX(0.9524);transform-origin:0 0;">Kunde seit:</span>
<div style="left:858px;top:315px;width:160px;height:20px;background:#fff;border:1px solid #bcbcbc;box-sizing:border-box"></div>
<span style="left:863px;top:320.82px;font-size:9.97px;color:#333;transform:scaleX(0.9524);transform-origin:0 0;">11.04.2016</span>
<div style="left:1002px;top:317px;width:15px;height:16px;background:#e6e6e6;border:1px solid #c6c6c6;box-sizing:border-box"></div>
<svg style="left:1005.5px;top:322px;" width="8" height="5.5" viewBox="0 0 8 5.5"><path d="M0.7 0.7L4.0 4.5L7.3 0.7" fill="none" stroke="#444" stroke-width="1.5"/></svg>
<span style="left:777px;top:343.82px;font-size:9.97px;color:#404040;transform:scaleX(0.9524);transform-origin:0 0;">Kundengruppe:</span>
<div style="left:858px;top:338px;width:160px;height:20px;background:#fff;border:1px solid #bcbcbc;box-sizing:border-box"></div>
<span style="left:863px;top:343.82px;font-size:9.97px;color:#333;transform:scaleX(0.9524);transform-origin:0 0;">Händler</span>
<div style="left:1002px;top:340px;width:15px;height:16px;background:#e6e6e6;border:1px solid #c6c6c6;box-sizing:border-box"></div>
<svg style="left:1005.5px;top:345px;" width="8" height="5.5" viewBox="0 0 8 5.5"><path d="M0.7 0.7L4.0 4.5L7.3 0.7" fill="none" stroke="#444" stroke-width="1.5"/></svg>
<span style="left:777px;top:367.82px;font-size:9.97px;color:#404040;transform:scaleX(0.9524);transform-origin:0 0;">Kundenkategorie:</span>
<div style="left:858px;top:362px;width:160px;height:20px;background:#fff;border:1px solid #bcbcbc;box-sizing:border-box"></div>
<span style="left:863px;top:367.82px;font-size:9.97px;color:#333;transform:scaleX(0.9524);transform-origin:0 0;">Key-Accounts</span>
<div style="left:1002px;top:364px;width:15px;height:16px;background:#e6e6e6;border:1px solid #c6c6c6;box-sizing:border-box"></div>
<svg style="left:1005.5px;top:369px;" width="8" height="5.5" viewBox="0 0 8 5.5"><path d="M0.7 0.7L4.0 4.5L7.3 0.7" fill="none" stroke="#444" stroke-width="1.5"/></svg>
<span style="left:777px;top:390.82px;font-size:9.97px;color:#404040;transform:scaleX(0.9524);transform-origin:0 0;">Erstkontakt über:</span>
<div style="left:858px;top:385px;width:160px;height:20px;background:#fff;border:1px solid #bcbcbc;box-sizing:border-box"></div>
<span style="left:777px;top:414.82px;font-size:9.97px;color:#404040;transform:scaleX(0.9524);transform-origin:0 0;">Kunde von Firma:</span>
<div style="left:858px;top:409px;width:160px;height:20px;background:#fff;border:1px solid #bcbcbc;box-sizing:border-box"></div>
<div style="left:1002px;top:411px;width:15px;height:16px;background:#e6e6e6;border:1px solid #c6c6c6;box-sizing:border-box"></div>
<svg style="left:1005.5px;top:416px;" width="8" height="5.5" viewBox="0 0 8 5.5"><path d="M0.7 0.7L4.0 4.5L7.3 0.7" fill="none" stroke="#444" stroke-width="1.5"/></svg>
<span style="left:777px;top:437.82px;font-size:9.97px;color:#404040;transform:scaleX(0.9524);transform-origin:0 0;">Sprache:</span>
<div style="left:858px;top:432px;width:160px;height:20px;background:#fff;border:1px solid #bcbcbc;box-sizing:border-box"></div>
<span style="left:863px;top:437.82px;font-size:9.97px;color:#333;transform:scaleX(0.9524);transform-origin:0 0;">Deutsch</span>
<div style="left:1002px;top:434px;width:15px;height:16px;background:#e6e6e6;border:1px solid #c6c6c6;box-sizing:border-box"></div>
<svg style="left:1005.5px;top:439px;" width="8" height="5.5" viewBox="0 0 8 5.5"><path d="M0.7 0.7L4.0 4.5L7.3 0.7" fill="none" stroke="#444" stroke-width="1.5"/></svg>
<span style="left:777px;top:460.82px;font-size:9.97px;color:#404040;transform:scaleX(0.9524);transform-origin:0 0;">Druckvorlagenset:</span>
<div style="left:858px;top:455px;width:160px;height:20px;background:#fff;border:1px solid #bcbcbc;box-sizing:border-box"></div>
<div style="left:1002px;top:457px;width:15px;height:16px;background:#e6e6e6;border:1px solid #c6c6c6;box-sizing:border-box"></div>
<svg style="left:1005.5px;top:462px;" width="8" height="5.5" viewBox="0 0 8 5.5"><path d="M0.7 0.7L4.0 4.5L7.3 0.7" fill="none" stroke="#444" stroke-width="1.5"/></svg>
<div style="left:1034px;top:259px;width:251px;height:223px;border:1px solid #c4c4c4;box-sizing:border-box"></div>
<span style="left:1045px;top:253.82px;font-size:9.97px;color:#404040;transform:scaleX(0.9524);transform-origin:0 0;background:#fff;padding:0 4px;margin-left:-4px">Kundenhistorie</span>
<div style="left:1265px;top:268px;width:15px;height:184px;background:#f0f0f0"></div>
<svg style="left:1268px;top:272px;" width="9" height="6" viewBox="0 0 9 6"><path d="M0.8 5L4.5 1.2 8.2 5" fill="none" stroke="#c6c6c6" stroke-width="1.1"/></svg>
<svg style="left:1268px;top:442px;" width="9" height="6" viewBox="0 0 9 6"><path d="M0.8 1L4.5 4.8 8.2 1" fill="none" stroke="#c6c6c6" stroke-width="1.1"/></svg>
<svg style="left:1046px;top:282px;" width="15" height="13" viewBox="0 0 15 13"><path d="M0.5 1h2.5l2 7.5h7.5l1.8-5.5h-10" fill="none" stroke="#a8a8a8" stroke-width="1.6" stroke-linejoin="round"/><rect x="4.5" y="4" width="8.5" height="4" fill="#a8a8a8"/><rect x="4.5" y="10" width="2.4" height="2.4" fill="#a8a8a8"/><rect x="10.3" y="10" width="2.4" height="2.4" fill="#a8a8a8"/></svg>
<span style="left:1067px;top:272.82px;font-size:9.97px;color:#404040;transform:scaleX(0.9524);transform-origin:0 0;">Auftrag AU201905167 angelegt von JTL-</span>
<span style="left:1067px;top:283.82px;font-size:9.97px;color:#404040;transform:scaleX(0.9524);transform-origin:0 0;">Wawi.</span>
<span style="left:1066px;top:297.75px;font-size:7.56px;color:#777;transform:scaleX(0.9524);transform-origin:0 0;">03.05.2019 - 11:08</span>
<div style="left:1040px;top:309px;width:224px;height:30px;background:#f5f5f5"></div>
<svg style="left:1046px;top:316px;" width="15" height="13" viewBox="0 0 15 13"><path d="M0.5 1h2.5l2 7.5h7.5l1.8-5.5h-10" fill="none" stroke="#a8a8a8" stroke-width="1.6" stroke-linejoin="round"/><rect x="4.5" y="4" width="8.5" height="4" fill="#a8a8a8"/><rect x="4.5" y="10" width="2.4" height="2.4" fill="#a8a8a8"/><rect x="10.3" y="10" width="2.4" height="2.4" fill="#a8a8a8"/></svg>
<span style="left:1067px;top:313.82px;font-size:9.97px;color:#404040;transform:scaleX(0.9524);transform-origin:0 0;">Angebot AN20190510 wurde erstellt.</span>
<span style="left:1066px;top:328.75px;font-size:7.56px;color:#777;transform:scaleX(0.9524);transform-origin:0 0;">02.05.2019 - 16:58</span>
<svg style="left:1046px;top:353px;" width="14" height="15" viewBox="0 0 14 15"><rect x="2" y="2" width="11.5" height="13" rx="1" fill="#b0b0b0"/><rect x="0" y="0" width="11.5" height="13" rx="1" fill="#b0b0b0" stroke="#fff" stroke-width="1"/><path d="M2.5 3.5h6.5M2.5 6h6.5M2.5 8.5h6.5" stroke="#fff" stroke-width="1.1"/></svg>
<span style="left:1070px;top:346.82px;font-size:9.97px;color:#404040;transform:scaleX(0.9524);transform-origin:0 0;">Notiz während des Telefonats</span>
<span style="left:1066px;top:372.75px;font-size:7.56px;color:#777;transform:scaleX(0.9524);transform-origin:0 0;">02.05.2019 - 15:24</span>
<div style="left:1040px;top:384px;width:224px;height:43px;background:#f5f5f5"></div>
<svg style="left:1046px;top:397px;" width="14" height="15" viewBox="0 0 14 15"><rect x="2" y="2" width="11.5" height="13" rx="1" fill="#b0b0b0"/><rect x="0" y="0" width="11.5" height="13" rx="1" fill="#b0b0b0" stroke="#f5f5f5" stroke-width="1"/><path d="M2.5 3.5h6.5M2.5 6h6.5M2.5 8.5h6.5" stroke="#f5f5f5" stroke-width="1.1"/></svg>
<span style="left:1070px;top:389.82px;font-size:9.97px;color:#404040;transform:scaleX(0.9524);transform-origin:0 0;">Beim letzten Mal einen Rabatt von 5% in</span>
<span style="left:1070px;top:401.82px;font-size:9.97px;color:#404040;transform:scaleX(0.9524);transform-origin:0 0;">Aussicht gestellt.</span>
<span style="left:1066px;top:415.75px;font-size:7.56px;color:#777;transform:scaleX(0.9524);transform-origin:0 0;">02.05.2019 - 14:33</span>
<svg style="left:1046px;top:460px;" width="14" height="14" viewBox="0 0 14 14"><rect x="0" y="0" width="14" height="14" rx="2" fill="#a0a0a0"/><path d="M7.0 3V11M3 7.0H11" stroke="#fff" stroke-width="2.4"/></svg>
<div style="left:1066px;top:459px;width:153px;height:16px;border:1px solid #c6c6c6;box-sizing:border-box;background:#fff"></div>
<svg style="left:1071px;top:462px;" width="10" height="10" viewBox="0 0 10 10"><circle cx="4" cy="4" r="3" fill="none" stroke="#9a9a9a" stroke-width="1.2"/><path d="M6.2 6.2l2.8 2.8" stroke="#9a9a9a" stroke-width="1.4"/></svg>
<svg style="left:1225px;top:459px;" width="14" height="15" viewBox="0 0 14 15"><rect x="2" y="2" width="11.5" height="13" rx="1" fill="#f18a2b"/><rect x="0" y="0" width="11.5" height="13" rx="1" fill="#f18a2b" stroke="#fff" stroke-width="1"/><path d="M2.5 3.5h6.5M2.5 6h6.5M2.5 8.5h6.5" stroke="#fff" stroke-width="1.1"/></svg>
<svg style="left:1244px;top:459px;" width="15" height="15" viewBox="0 0 15 15"><circle cx="7.5" cy="7.5" r="7" fill="#f18a2b"/><path d="M7.5 3.5v4.2h3" fill="none" stroke="#fff" stroke-width="1.2"/></svg>
<svg style="left:1264px;top:459px;" width="16" height="15" viewBox="0 0 16 15"><path d="M10.67 6.49 L10.67 7.51 L9.33 8.16 L9.03 8.89 L9.52 10.30 L8.80 11.02 L7.39 10.53 L6.66 10.83 L6.01 12.17 L4.99 12.17 L4.34 10.83 L3.61 10.53 L2.20 11.02 L1.48 10.30 L1.97 8.89 L1.67 8.16 L0.33 7.51 L0.33 6.49 L1.67 5.84 L1.97 5.11 L1.48 3.70 L2.20 2.98 L3.61 3.47 L4.34 3.17 L4.99 1.83 L6.01 1.83 L6.66 3.17 L7.39 3.47 L8.80 2.98 L9.52 3.70 L9.03 5.11 L9.33 5.84ZM7.80 7.00A2.3 2.3 0 1 0 3.20 7.00A2.3 2.3 0 1 0 7.80 7.00Z" fill="#8c8c8c" fill-rule="evenodd"/><circle cx="12.5" cy="3.2" r="1.9" fill="none" stroke="#8c8c8c" stroke-width="1.2"/><circle cx="12.5" cy="11" r="1.9" fill="none" stroke="#8c8c8c" stroke-width="1.2"/></svg>
<div style="left:772px;top:492px;width:513px;height:84px;border:1px solid #c4c4c4;box-sizing:border-box"></div>
<span style="left:782px;top:487.82px;font-size:9.97px;color:#404040;transform:scaleX(0.9524);transform-origin:0 0;background:#fff;padding:0 4px;margin-left:-4px">Zahlungen</span>
<div style="left:777px;top:506px;width:13px;height:12px;border:1px solid #9a9a9a;background:#fff;box-sizing:border-box"></div>
<span style="left:793px;top:507.82px;font-size:9.97px;color:#404040;transform:scaleX(0.9524);transform-origin:0 0;">Mahnstopp</span>
<span style="left:777px;top:530.82px;font-size:9.97px;color:#404040;transform:scaleX(0.9524);transform-origin:0 0;">Zahlungsziel (Tage):</span>
<div style="left:868px;top:525px;width:158px;height:21px;background:#fff;border:1px solid #bcbcbc;box-sizing:border-box"></div>
<span style="left:872px;top:530.82px;font-size:9.97px;color:#333;transform:scaleX(0.9524);transform-origin:0 0;">0</span>
<span style="left:1030px;top:530.82px;font-size:9.97px;color:#404040;transform:scaleX(0.9524);transform-origin:0 0;">Rabatt (%):</span>
<div style="left:1082px;top:525px;width:198px;height:21px;background:#fff;border:1px solid #bcbcbc;box-sizing:border-box"></div>
<span style="left:1086px;top:530.82px;font-size:9.97px;color:#333;transform:scaleX(0.9524);transform-origin:0 0;">5</span>
<span style="left:777px;top:553.82px;font-size:9.97px;color:#404040;transform:scaleX(0.9524);transform-origin:0 0;">Zahlungsart:</span>
<div style="left:868px;top:549px;width:158px;height:20px;background:#fff;border:1px solid #bcbcbc;box-sizing:border-box"></div>
<span style="left:873px;top:554.82px;font-size:9.97px;color:#333;transform:scaleX(0.9524);transform-origin:0 0;">Kreditkarte</span>
<div style="left:1010px;top:551px;width:15px;height:16px;background:#e6e6e6;border:1px solid #c6c6c6;box-sizing:border-box"></div>
<svg style="left:1013.5px;top:556px;" width="8" height="5.5" viewBox="0 0 8 5.5"><path d="M0.7 0.7L4.0 4.5L7.3 0.7" fill="none" stroke="#444" stroke-width="1.5"/></svg>
<span style="left:1030px;top:553.82px;font-size:9.97px;color:#404040;transform:scaleX(0.9524);transform-origin:0 0;">Kreditlimit:</span>
<div style="left:1082px;top:549px;width:198px;height:20px;background:#fff;border:1px solid #bcbcbc;box-sizing:border-box"></div>
<span style="left:1086px;top:554.82px;font-size:9.97px;color:#333;transform:scaleX(0.9524);transform-origin:0 0;">1000</span>
<div style="left:773px;top:588px;width:71px;height:18px;background:#a9a9a9"></div>
<span style="left:779px;top:592.82px;font-size:9.97px;color:#fff;transform:scaleX(0.9524);transform-origin:0 0;">Eigene Felder</span>
<svg style="left:1271px;top:595px;" width="9" height="5" viewBox="0 0 9 5"><path d="M0 0H9L4.5 5z" fill="#444"/></svg>
<div style="left:773px;top:606px;width:511px;height:3px;background:#a9a9a9"></div>
<div style="left:773px;top:609px;width:511px;height:196px;border:1px solid #c9c9c9;border-top:none;box-sizing:border-box;background:#fff"></div>
<div style="left:233px;top:820px;width:1067px;height:2px;background:#d9d9d9"></div>
<div style="left:1167px;top:829px;width:60px;height:19px;background:#e6e6e6;border:1px solid #c3c3c3;box-sizing:border-box"></div>
<span style="left:1167px;top:834.20px;width:60px;text-align:center;font-size:9.5px;color:#222">Speichern</span>
<div style="left:1234px;top:829px;width:59px;height:19px;background:#e6e6e6;border:1px solid #c3c3c3;box-sizing:border-box"></div>
<span style="left:1234px;top:834.20px;width:59px;text-align:center;font-size:9.5px;color:#222">Abbrechen</span>
<svg style="left:0;top:0" width="1300" height="856" viewBox="0 0 1300 856"><path d="M254 73 C268 62 282 59 292 60 C318 62 336 85 336.5 120 L336.5 135.5 L353 135.5 Q359.5 135.5 355.5 140 L323 174.5 Q320 177.5 317 174.5 L284.5 140 Q280.5 135.5 287 135.5 L303.5 135.5 L303.5 118 C303 92 290 78 272 75 C266 74 260 74 254 73 Z" fill="#f48a25"/><path d="M1119.5 651 C1105 658 1093 663.5 1082 663.5 C1055 663.5 1037 645 1037 615 L1037 588 L1020 588 Q1015 588 1018 584 L1050 549.5 Q1053 546.5 1056 549.5 L1088 584 Q1091 588 1086 588 L1070 588 L1070 615 C1071 632 1080 644 1095 648.5 C1103 650.5 1111 651 1119.5 651 Z" fill="#f48a25"/></svg>
</body></html>
